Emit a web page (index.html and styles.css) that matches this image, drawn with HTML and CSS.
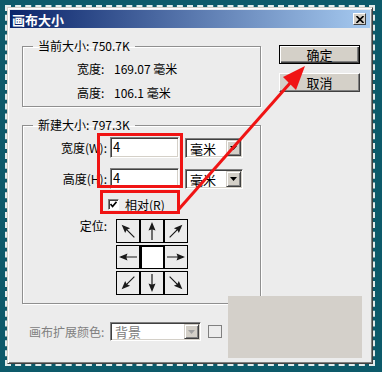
FILE: index.html
```html
<!DOCTYPE html>
<html lang="zh-CN">
<head>
	<meta charset="UTF-8">
	<title>画布大小</title>
	<link rel="stylesheet" href="styles.css">
</head>
<body>
	<svg width="0" height="0" class="defs">
		<symbol id="arr" viewBox="0 0 22 22">
			<path d="M11 2 L14.5 10.5 L11.6 9.4 L11.6 20 L10.4 20 L10.4 9.4 L7.5 10.5 Z" fill="#1a1a1a"/>
		</symbol>
		<symbol id="down" viewBox="0 0 7 4">
			<path d="M0 0 H7 L3.5 4 Z"/>
		</symbol>
	</svg>
	<div class="frame">
		<div class="dialog">
			<div class="titlebar">
				<span class="title">画布大小</span>
				<span class="close"><svg width="8" height="7" viewBox="0 0 8 7"><path d="M0.5 0 L7.5 7 M7.5 0 L0.5 7" stroke="#000" stroke-width="1.6"/></svg></span>
			</div>
			<div class="content">
				<div class="left">
					<fieldset class="group group-cur">
						<legend>当前大小: 750.7K</legend>
						<div class="info"><span class="k">宽度:</span>169.07 毫米</div>
						<div class="info"><span class="k">高度:</span>106.1 毫米</div>
					</fieldset>
					<fieldset class="group group-new">
						<legend>新建大小: 797.3K</legend>
						<div class="field">
							<label>宽度(W):</label>
							<div class="input">4</div>
							<div class="select"><span>毫米</span><span class="drop"><svg width="7" height="4"><use href="#down"/></svg></span></div>
						</div>
						<div class="field">
							<label>高度(H):</label>
							<div class="input">4</div>
							<div class="select"><span>毫米</span><span class="drop"><svg width="7" height="4"><use href="#down"/></svg></span></div>
						</div>
						<div class="check">
							<span class="box"><svg width="7" height="7" viewBox="0 0 7 7"><path d="M0.5 3 L2.6 5.5 L6.5 0.8" fill="none" stroke="#000" stroke-width="1.7"/></svg></span>
							<span>相对(R)</span>
						</div>
						<div class="pos">
							<label>定位:</label>
							<div class="grid">
								<span class="cell"><svg class="r315"><use href="#arr"/></svg></span>
								<span class="cell"><svg><use href="#arr"/></svg></span>
								<span class="cell"><svg class="r45"><use href="#arr"/></svg></span>
								<span class="cell"><svg class="r270"><use href="#arr"/></svg></span>
								<span class="cell center"></span>
								<span class="cell"><svg class="r90"><use href="#arr"/></svg></span>
								<span class="cell"><svg class="r225"><use href="#arr"/></svg></span>
								<span class="cell"><svg class="r180"><use href="#arr"/></svg></span>
								<span class="cell"><svg class="r135"><use href="#arr"/></svg></span>
							</div>
						</div>
					</fieldset>
				</div>
				<div class="buttons">
					<button class="btn default">确定</button>
					<button class="btn">取消</button>
				</div>
			</div>
			<div class="bottom">
				<span class="muted">画布扩展颜色:</span>
				<div class="select wide off"><span>背景</span><span class="drop"><svg width="7" height="4"><use href="#down"/></svg></span></div>
				<span class="swatch"></span>
			</div>
			<div class="patch"></div>
		</div>
	</div>
	<!-- red marks drawn over the dialog -->
	<svg class="marks" width="382" height="372" viewBox="0 0 382 372">
		<rect x="98.5" y="134.5" width="83" height="52" fill="none" stroke="#f01414" stroke-width="3"/>
		<rect x="101.5" y="191.5" width="77" height="21" fill="none" stroke="#f01414" stroke-width="3"/>
		<line x1="179" y1="209" x2="291" y2="82" stroke="#f01414" stroke-width="3"/>
		<polygon points="305,66 283,77 296,90" fill="#f01414"/>
	</svg>
</body>
</html>
```

FILE: styles.css
```css
*{
	margin: 0;
	padding: 0;
	box-sizing: border-box;
}
body{
	width: 382px;
	height: 372px;
	overflow: hidden;
	position: relative;
	padding: 5px;
	background: #0d5a6a;
	font: 12px/1 "Noto Sans CJK SC", "Liberation Sans", sans-serif;
	color: #000;
}
.defs{
	position: absolute;
}
.frame{
	width: 370px;
	height: 361px;
	border: 2px dashed #e3ecec;
}
.dialog{
	width: 366px;
	height: 357px;
	position: relative;
	padding: 2px;
	background: #ececec;
	border: 1px solid;
	border-color: #d4d0c8 #404040 #404040 #d4d0c8;
	box-shadow: inset 1px 1px #fff, inset -1px -1px #808080;
}
.titlebar{
	height: 18px;
	display: flex;
	align-items: center;
	justify-content: space-between;
	padding: 0 4px 0 2px;
	background: linear-gradient(90deg, #0a246a, #a6caf0);
}
.title{
	color: #fff;
	font-weight: bold;
	font-size: 13px;
}
.close{
	width: 13px;
	height: 12px;
	display: flex;
	align-items: center;
	justify-content: center;
	background: #d4d0c8;
	border: 1px solid;
	border-color: #fff #404040 #404040 #fff;
}
.content{
	display: flex;
	padding: 10px 0 0 12px;
}
.group{
	width: 239px;
	border: 1px solid #8f8f8f;
	box-shadow: 1px 1px 0 #fff, inset 1px 1px 0 #fff;
}
.group legend{
	margin-left: 10px;
	padding: 0 5px;
	line-height: 16px;
}
.group-cur{
	padding: 3px 0 1px;
}
.info{
	height: 24px;
	line-height: 24px;
	padding-left: 54px;
}
.info .k{
	display: inline-block;
	width: 37px;
}
.group-new{
	margin-top: 10px;
	padding: 4px 0 8px;
}
.field{
	display: flex;
	align-items: flex-start;
	height: 21px;
}
.field + .field{
	margin-top: 10px;
}
.field label, .pos label{
	width: 84px;
	margin-right: 3px;
	text-align: right;
}
.field label{
	line-height: 22px;
}
.input{
	width: 69px;
	height: 21px;
	padding-left: 2px;
	background: #fff;
	font-size: 13px;
	line-height: 17px;
	border: 1px solid;
	border-color: #808080 #fff #fff #808080;
	box-shadow: inset 1px 1px #404040, inset -1px -1px #d4d0c8;
}
.select{
	width: 58px;
	height: 20px;
	margin: 1px 0 0 6px;
	display: flex;
	align-items: center;
	justify-content: space-between;
	padding: 1px 1px 1px 4px;
	background: #fff;
	font-size: 13px;
	border: 1px solid;
	border-color: #808080 #fff #fff #808080;
	box-shadow: inset 1px 1px #404040, inset -1px -1px #d4d0c8;
}
.drop{
	width: 15px;
	height: 16px;
	display: flex;
	align-items: center;
	justify-content: center;
	background: #d4d0c8;
	border: 1px solid;
	border-color: #d4d0c8 #404040 #404040 #d4d0c8;
	box-shadow: inset 1px 1px #fff, inset -1px -1px #808080;
}
.check{
	display: flex;
	align-items: center;
	height: 11px;
	margin: 10px 0 0 85px;
}
.box{
	width: 11px;
	height: 11px;
	margin-right: 6px;
	display: flex;
	align-items: center;
	justify-content: center;
	background: #fff;
	border: 1px solid;
	border-color: #808080 #fff #fff #808080;
	box-shadow: inset 1px 1px #404040;
}
.pos{
	display: flex;
	margin-top: 9px;
}
.pos label{
	line-height: 13px;
}
.grid{
	margin-left: 6px;
	display: grid;
	grid-template-columns: repeat(3, 24px);
	grid-auto-rows: 24px;
	row-gap: 2px;
}
.cell{
	border: 1px solid #000;
	display: flex;
	align-items: center;
	justify-content: center;
}
.cell svg{
	width: 22px;
	height: 22px;
}
.cell.center{
	background: #fff;
	box-shadow: inset 1px 1px #000;
}
.r45{ transform: rotate(45deg); }
.r90{ transform: rotate(90deg); }
.r135{ transform: rotate(135deg); }
.r180{ transform: rotate(180deg); }
.r225{ transform: rotate(225deg); }
.r270{ transform: rotate(270deg); }
.r315{ transform: rotate(315deg); }
.buttons{
	margin-left: 18px;
	padding-top: 7px;
	display: flex;
	flex-direction: column;
	gap: 9px;
}
.btn{
	width: 81px;
	height: 19px;
	background: #d4d0c8;
	font: 13px/1 "Noto Sans CJK SC", "Liberation Sans", sans-serif;
	color: #000;
	border: 1px solid;
	border-color: #fff #404040 #404040 #fff;
	box-shadow: inset -1px -1px #808080;
}
.btn.default{
	border-color: #000;
	box-shadow: inset 1px 1px #fff, inset -1px -1px #404040, inset -2px -2px #808080;
}
.bottom{
	display: flex;
	align-items: center;
	margin-top: 18px;
	padding-left: 19px;
}
.muted{
	width: 81px;
	color: #808080;
}
.select.wide{
	width: 91px;
	height: 19px;
	margin: 0;
}
.select.off{
	color: #808080;
}
.select.off .drop{
	height: 15px;
	fill: #a0a0a0;
}
.swatch{
	width: 14px;
	height: 13px;
	margin-left: 7px;
	border: 1px solid #808080;
	background: #ececec;
}
.patch{
	position: absolute;
	left: 220px;
	top: 288px;
	width: 134px;
	height: 62px;
	background: #d4d0ca;
}
.marks{
	position: absolute;
	left: 0;
	top: 0;
	pointer-events: none;
}
```
